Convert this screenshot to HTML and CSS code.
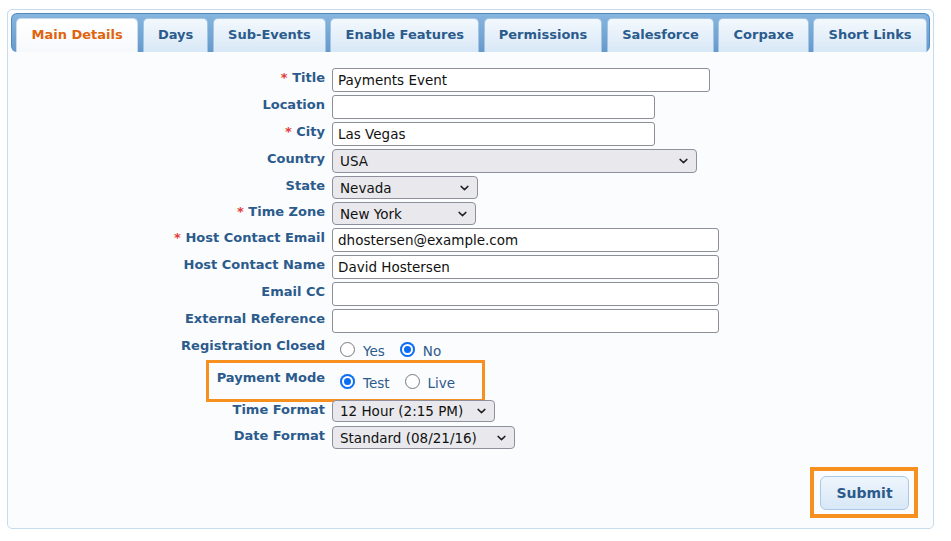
FILE: index.html
```html
<!DOCTYPE html>
<html>
<head>
<meta charset="utf-8">
<title>Main Details</title>
<link rel="stylesheet" href="styles.css">
</head>
<body>
<div class="panel">
  <ul class="tabs">
    <li class="tab active">Main Details</li>
    <li class="tab">Days</li>
    <li class="tab">Sub-Events</li>
    <li class="tab">Enable Features</li>
    <li class="tab">Permissions</li>
    <li class="tab">Salesforce</li>
    <li class="tab">Corpaxe</li>
    <li class="tab">Short Links</li>
  </ul>

  <form class="form">
    <div class="row">
      <label class="lbl"><span class="req">*</span> Title</label>
      <input class="txt w-title" type="text" value="Payments Event">
    </div>
    <div class="row">
      <label class="lbl">Location</label>
      <input class="txt w-mid" type="text" value="">
    </div>
    <div class="row">
      <label class="lbl"><span class="req">*</span> City</label>
      <input class="txt w-mid" type="text" value="Las Vegas">
    </div>
    <div class="row">
      <label class="lbl">Country</label>
      <span class="sel w-country"><select><option>USA</option></select><svg class="chev" viewBox="0 0 10 6"><path d="M1.2 1.2L5 4.8L8.8 1.2" fill="none" stroke="#222" stroke-width="1.6" stroke-linecap="round" stroke-linejoin="round"/></svg></span>
    </div>
    <div class="row">
      <label class="lbl">State</label>
      <span class="sel w-state"><select><option>Nevada</option></select><svg class="chev" viewBox="0 0 10 6"><path d="M1.2 1.2L5 4.8L8.8 1.2" fill="none" stroke="#222" stroke-width="1.6" stroke-linecap="round" stroke-linejoin="round"/></svg></span>
    </div>
    <div class="row">
      <label class="lbl"><span class="req">*</span> Time Zone</label>
      <span class="sel w-tz"><select><option>New York</option></select><svg class="chev" viewBox="0 0 10 6"><path d="M1.2 1.2L5 4.8L8.8 1.2" fill="none" stroke="#222" stroke-width="1.6" stroke-linecap="round" stroke-linejoin="round"/></svg></span>
    </div>
    <div class="row">
      <label class="lbl"><span class="req">*</span> Host Contact Email</label>
      <input class="txt w-wide" type="text" value="dhostersen@example.com">
    </div>
    <div class="row">
      <label class="lbl">Host Contact Name</label>
      <input class="txt w-wide" type="text" value="David Hostersen">
    </div>
    <div class="row">
      <label class="lbl">Email CC</label>
      <input class="txt w-wide" type="text" value="">
    </div>
    <div class="row">
      <label class="lbl">External Reference</label>
      <input class="txt w-wide" type="text" value="">
    </div>
    <div class="row radio-row">
      <label class="lbl">Registration Closed</label>
      <div class="radios">
        <label class="opt"><input type="radio" name="closed"><span>Yes</span></label>
        <label class="opt"><input type="radio" name="closed" checked><span>No</span></label>
      </div>
    </div>
    <div class="row radio-row highlight">
      <label class="lbl">Payment Mode</label>
      <div class="radios">
        <label class="opt"><input type="radio" name="mode" checked><span>Test</span></label>
        <label class="opt"><input type="radio" name="mode"><span>Live</span></label>
      </div>
    </div>
    <div class="row row-small">
      <label class="lbl">Time Format</label>
      <span class="sel small w-time"><select><option>12 Hour (2:15 PM)</option></select><svg class="chev" viewBox="0 0 10 6"><path d="M1.2 1.2L5 4.8L8.8 1.2" fill="none" stroke="#222" stroke-width="1.6" stroke-linecap="round" stroke-linejoin="round"/></svg></span>
    </div>
    <div class="row">
      <label class="lbl">Date Format</label>
      <span class="sel w-date"><select><option>Standard (08/21/16)</option></select><svg class="chev" viewBox="0 0 10 6"><path d="M1.2 1.2L5 4.8L8.8 1.2" fill="none" stroke="#222" stroke-width="1.6" stroke-linecap="round" stroke-linejoin="round"/></svg></span>
    </div>
  </form>

  <div class="actions">
    <div class="hl-box"><button class="submit" type="button">Submit</button></div>
  </div>
</div>
</body>
</html>
```

FILE: styles.css
```css
* {
  box-sizing: border-box;
}

body {
  margin: 0;
  background: #ffffff;
  font-family: "DejaVu Sans", Verdana, sans-serif;
}

.panel {
  margin: 9px 0 0 7px;
  width: 927px;
  height: 520px;
  border: 1px solid #c6dbee;
  border-radius: 5px;
  background: #fbfcfd;
  padding: 3px;
}

/* Tabs */
.tabs {
  display: flex;
  gap: 4.6px;
  list-style: none;
  margin: 0;
  padding: 4px 4px 0 4px;
  height: 39px;
  background: linear-gradient(#86b5de, #6699cc);
  border: 1px solid #4f89c2;
  border-bottom: none;
  border-radius: 6px;
}

.tab {
  height: 34px;
  padding: 0 14.1px;
  border: 1px solid #a3c6e5;
  border-bottom: none;
  border-radius: 5px 5px 0 0;
  background: linear-gradient(#f3f8fd, #d8e8f7);
  color: #2b5b8c;
  font-weight: bold;
  font-size: 13px;
  line-height: 32px;
  white-space: nowrap;
}

.tab.active {
  padding: 0 14.5px;
  background: linear-gradient(#ffffff, #f6f9fc);
  border-color: #c9dcee;
  color: #e0640d;
}

/* Form */
.form {
  margin: 16px 0 0 0;
}

.row {
  display: flex;
  align-items: flex-start;
  gap: 7px;
  margin-bottom: 3px;
}

.lbl {
  flex: 0 0 314px;
  width: 314px;
  text-align: right;
  font-weight: bold;
  font-size: 13px;
  line-height: 16px;
  padding-top: 2px;
  color: #2b5b8c;
  white-space: nowrap;
}

.req {
  color: #e23b3b;
}

.txt {
  height: 24px;
  border: 1px solid #8e8e99;
  border-radius: 3px;
  background: #ffffff;
  padding: 0 5px;
  font-family: "DejaVu Sans", Verdana, sans-serif;
  font-size: 13.5px;
  color: #111111;
  outline: none;
}

.w-title { width: 378px; }
.w-mid { width: 323px; }
.w-wide { width: 387px; }

.sel {
  position: relative;
  display: inline-block;
  height: 24px;
}

.sel select {
  appearance: none;
  -webkit-appearance: none;
  width: 100%;
  height: 100%;
  border: 1px solid #8f8f9d;
  border-radius: 4px;
  background: #e9e9ed;
  padding: 0 24px 0 7px;
  font-family: "DejaVu Sans", Verdana, sans-serif;
  font-size: 13.5px;
  color: #111111;
  outline: none;
}

.sel .chev {
  position: absolute;
  right: 9px;
  top: 50%;
  width: 9px;
  height: 6px;
  margin-top: -3px;
  pointer-events: none;
}

.sel.small {
  height: 22px;
}

.w-country { width: 365px; }
.w-state { width: 146px; height: 23px; }
.w-tz { width: 144px; height: 23px; }
.w-time { width: 163px; }
.w-date { width: 183px; height: 23px; }

.row-small {
  margin-bottom: 4px;
}

/* Radios */
.radio-row {
  height: 29px;
}

.radios {
  display: flex;
  align-items: center;
  padding: 3px 0 0 8px;
}

.opt {
  display: flex;
  align-items: center;
  gap: 8px;
  margin-right: 15px;
  font-size: 13.5px;
  color: #2b5b8c;
}

.opt span {
  margin-top: 4px;
}

.opt input {
  appearance: none;
  -webkit-appearance: none;
  margin: 0;
  width: 15px;
  height: 15px;
  border: 1px solid #7a7a80;
  border-radius: 50%;
  background: #ffffff;
}

.opt input:checked {
  border: none;
  background: #0b6ef5;
  box-shadow: inset 0 0 0 2px #0b6ef5, inset 0 0 0 4px #ffffff;
}

/* Highlight box around payment mode */
.highlight {
  position: relative;
}

.highlight::before {
  content: "";
  position: absolute;
  left: 195px;
  top: -8px;
  width: 273px;
  height: 36px;
  border: 3px solid #f7901e;
  pointer-events: none;
}

/* Submit */
.actions {
  display: flex;
  justify-content: flex-end;
  margin-top: 18px;
  padding-right: 12px;
}

.hl-box {
  border: 4px solid #f7901e;
  padding: 5px 5px 4px 6px;
}

.submit {
  display: block;
  width: 89px;
  height: 34px;
  border: 1px solid #a9c9e6;
  border-radius: 6px;
  background: linear-gradient(#eef5fc, #d8e8f7);
  font-family: "DejaVu Sans", Verdana, sans-serif;
  font-weight: bold;
  font-size: 14px;
  color: #2b5b8c;
}
```
